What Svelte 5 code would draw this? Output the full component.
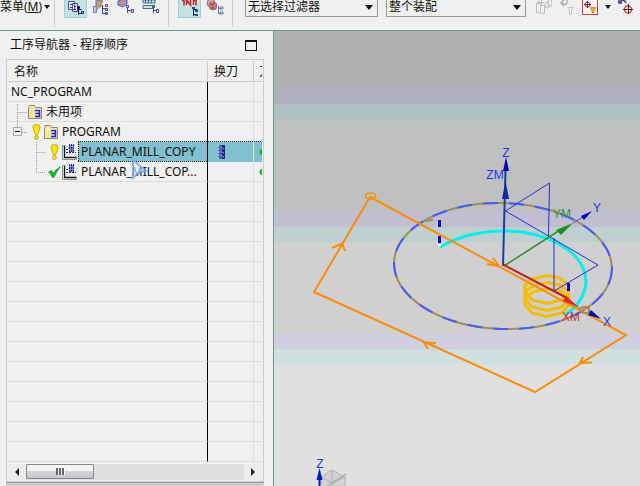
<script>
  const rows = [
    { name: 'NC_PROGRAM', kind: 'root' },
    { name: '未用项', kind: 'unused' },
    { name: 'PROGRAM', kind: 'program' },
    { name: 'PLANAR_MILL_COPY', kind: 'op', status: 'warn', selected: true },
    { name: 'PLANAR_MILL_COP...', kind: 'op', status: 'ok' },
    ...Array.from({ length: 14 }, () => ({ name: '', kind: 'empty' }))
  ];
</script>

{#snippet folder()}
  <svg width="15" height="14" viewBox="0 0 15 14" aria-hidden="true">
    <path d="M.5 2.5l1-2h5l1 2h6v11H.5z" fill="#f7e79b" stroke="#8d8870" />
    <path d="M1.5 4.5h11" stroke="#fffbe0" />
    <path d="M7 5.5h4.5v6H7M7.5 8.5h4" fill="none" stroke="#1c1cf0" stroke-width="1.5" />
  </svg>
{/snippet}

{#snippet warn()}
  <svg width="9" height="16" viewBox="0 0 9 16" aria-hidden="true">
    <path d="M1 3Q1 .5 4.500.5T8 3Q7.500 7 5.500 10.500h-2Q1.500 7 1 3z" fill="#ffe500" stroke="#b39a18" stroke-width=".8" />
    <circle cx="4.500" cy="13.500" r="1.900" fill="#ffe500" stroke="#b39a18" stroke-width=".8" />
  </svg>
{/snippet}

{#snippet tick()}
  <svg width="13" height="12" viewBox="0 0 13 12" aria-hidden="true">
    <path d="M.5 6l3-1.500L5.500 7.500Q8 3 12.500.500 9 5 6 11.500H4.500Q3 8 .5 6z" fill="#17b52b" stroke="#109020" stroke-width=".6" />
  </svg>
{/snippet}

{#snippet mill()}
  <svg width="16" height="16" viewBox="0 0 16 16" aria-hidden="true">
    <path d="M3.500 1.500h-3v14h14v-3" fill="none" stroke="#909090" />
    <path d="M2.500 2v11.500H14" fill="none" stroke="#111" stroke-width="1.300" />
    <path d="M7 1h5v7H7z" fill="#7f86dc" />
    <path d="M7.500 0v9M9.500 0v9M11.500 0v9M4 5.500h3M4 8.500h10" stroke="#2525a8" stroke-dasharray="2 1" />
  </svg>
{/snippet}

<div class="app">
  <header class="toolbar">
    <button class="menu"><span>菜单(<u>M</u>)</span><i class="caret"></i></button>
    <span class="sep"></span>
    <div class="views">
      <button class="tool on" aria-label="程序顺序视图">
        <svg width="18" height="18" viewBox="0 0 18 18">
          <path d="M1.500 1.500h6v8h-6zM5.500 3.500h5v8h-5z" fill="#dfe4f2" stroke="#4a5590" />
          <path d="M3 4.500h2M3 7.500h2M7 6.500h2M7 9.500h2" stroke="#34407c" />
          <path d="M11.500 7v8M11.500 9.500h3M11.500 13.500h3" stroke="#14147c" />
          <path d="M10.500 6.500h2v2h-2zM14.500 11.500h2v2h-2z" fill="none" stroke="#14147c" />
        </svg>
      </button>
      <button class="tool" aria-label="机床视图">
        <svg width="18" height="18" viewBox="0 0 18 18">
          <path d="M4 0h6v3l-3 3H4z" fill="#a4a4aa" stroke="#777" />
          <path d="M6 3h4v3L7 8 5 6z" fill="#d8a14c" />
          <path d="M1.500 6.500h3v6h-3z" fill="#c3c6e4" stroke="#777cb0" />
          <path d="M4 10l5-5" stroke="#8a8a98" stroke-width="1.500" />
          <path d="M10.500 5v9M10.500 8.500h4M10.500 13.500h4" stroke="#4545a4" />
          <path d="M13.500 4.500h2v2h-2zM13.500 8.500h2v2h-2zM13.500 12.500h2v2h-2z" fill="none" stroke="#4545a4" />
        </svg>
      </button>
      <button class="tool" aria-label="几何视图">
        <svg width="18" height="18" viewBox="0 0 18 18">
          <path d="M1 1l5-2 4 1v4L6 7 1 5z" fill="#8b92e8" stroke="#5c629f" /><ellipse cx="5.500" cy="2.500" rx="2.500" ry="2" fill="#e58a56" />
          <path d="M10.500 7v6M10.500 10.500h4" stroke="#4545a4" /><path d="M9.500 5.500h2v2h-2zM14.500 9.500h2v3h-2z" fill="none" stroke="#4545a4" />
        </svg>
      </button>
      <button class="tool" aria-label="加工方法视图">
        <svg width="18" height="18" viewBox="0 0 18 18">
          <path d="M1 0h12v3H1zM1 5.500h10v3H1z" fill="#cfe3ea" stroke="#456d88" /><path d="M3.500 0v3M6.500 0v3M9.500 0v3" stroke="#456d88" />
          <path d="M11.500 7v6M11.500 10.500h3" stroke="#4545a4" /><path d="M10.500 5.500h2v2h-2zM14.500 9.500h2v3h-2z" fill="none" stroke="#4545a4" />
        </svg>
      </button>
    </div>
    <span class="sep"></span>
    <div class="views two">
      <button class="tool on" aria-label="刀轨">
        <svg width="18" height="18" viewBox="0 0 18 18">
          <path d="M1 .500h2v5M5.500 5V0l4 5V0M12.500 0v5M12 .500h3v5" fill="none" stroke="#c5202a" stroke-width="1.500" />
          <path d="M12.500 7v9M12.500 9.500h4M12.500 14.500h4" stroke="#20206a" /><path d="M11 7h3v2h-3zM14 10h3v2h-3zM14 14h3v2h-3z" fill="#284c74" />
        </svg>
      </button>
      <button class="tool" aria-label="确认刀轨">
        <svg width="18" height="18" viewBox="0 0 18 18">
          <circle cx="5" cy="3" r="4" fill="#e0a0a0" stroke="#837b7b" /><circle cx="7" cy="6" r="4" fill="#cf7b7b" stroke="#837b7b" />
          <path d="M4 3l2 2M8 3L6 6M5 8h4" stroke="#9c3c3c" />
          <path d="M12.500 6v8M12.500 8.500h3M12.500 13.500h3" stroke="#7777b8" /><path d="M14 7h3v2h-3zM14 12h3v2h-3z" fill="none" stroke="#7777b8" />
        </svg>
      </button>
    </div>
    <span class="sep"></span>
    <label class="filter"><select aria-label="选择过滤器"><option>无选择过滤器</option></select><i class="caret"></i></label>
    <label class="filter scope"><select aria-label="选择范围"><option>整个装配</option></select><i class="caret"></i></label>
    <div class="picks">
      <button class="pick" aria-label="装配选择">
        <svg width="16" height="16" viewBox="0 0 16 16" fill="none" stroke="#bdbdbd">
          <path d="M.500 3.500h4v9h-4zM4.500 5.500h4v8h-4M2.500 0v3M1 2.500h7M5.500 0v6" /><ellipse cx="11" cy="5" rx="2" ry="3" /><ellipse cx="14" cy="3" rx="2" ry="4" />
        </svg>
      </button>
      <button class="pick" aria-label="重置过滤器">
        <svg width="16" height="16" viewBox="0 0 16 16">
          <path d="M3 3q4 3 5 0V-1M5 0L2 3l3 3" fill="none" stroke="#b0b0b0" stroke-width="1.500" /><path d="M8.500 7.500h6l-2 3v4h-2v-4z" fill="#f0f0f0" stroke="#c4c4c4" />
        </svg>
      </button>
      <button class="pick" aria-label="点过滤器">
        <svg width="16" height="16" viewBox="0 0 16 16">
          <rect x=".5" y="-3" width="15" height="17.500" fill="#f6f4f2" stroke="#d04444" />
          <circle cx="5.500" cy="4.500" r="2.500" fill="none" stroke="#a43b3b" /><path d="M2 4.500h7M5.500 1v7" stroke="#503030" />
          <path d="M8 7.500h6l-2 3v2h-2v-2z" fill="#f2ab2e" stroke="#d99632" />
        </svg>
      </button>
      <i class="caret small"></i>
      <button class="pick" aria-label="旋转点">
        <svg width="16" height="16" viewBox="0 0 16 16">
          <path d="M1 0v3h3M2 2q4-4 6 1" fill="none" stroke="#3d4590" stroke-width="1.500" />
          <circle cx="10" cy="9.500" r="3.500" fill="none" stroke="#e04343" stroke-width="1.500" /><path d="M5 9.500h10M10.500 4v10" stroke="#402828" />
        </svg>
      </button>
    </div>
  </header>

  <main>
    <section class="navigator">
      <div class="title"><h1>工序导航器 - 程序顺序</h1><button class="max" aria-label="最大化"></button></div>
      <div class="tree">
        <table>
          <colgroup><col class="c1" /><col class="c2" /><col /></colgroup>
          <thead><tr><th>名称</th><th>换刀</th><th class="cut">刀</th></tr></thead>
          <tbody>
            {#each rows as row, i}
              <tr class={row.kind} class:selected={row.selected} class:before={rows[i + 1]?.selected}>
                <td>
                  <div class="cell">
                    {#if row.kind === 'unused'}
                      <svg class="lines" width="20" height="20" viewBox="0 0 20 20"><path d="M9.500 2v18M9.500 10.500h10" /></svg>
                      {@render folder()}
                    {:else if row.kind === 'program'}
                      <svg class="lines" width="20" height="20" viewBox="0 0 20 20">
                        <path d="M9.500 0v5M14 10.500h5" /><rect x="5.500" y="5.500" width="8" height="8" /><path class="minus" d="M7 9.500h5" />
                      </svg>
                      <span class="state">{@render warn()}</span>
                      {@render folder()}
                    {:else if row.kind === 'op'}
                      <svg class="lines deep" width="20" height="20" viewBox="0 0 20 20"><path d={row.selected ? 'M10.500 0v20M10.500 10.500h10' : 'M10.500 0v10.500h10'} /></svg>
                      <span class="state">{#if row.status === 'warn'}{@render warn()}{:else}{@render tick()}{/if}</span>
                      {@render mill()}
                    {/if}
                    {#if row.name}<span class="label">{row.name}</span>{/if}
                  </div>
                </td>
                <td>
                  {#if row.selected}
                    <svg class="cutter" width="9" height="14" viewBox="0 0 9 14"><path d="M1 0h7v14H1z" fill="#5258b8" /><path d="M5 0h3v14H5z" fill="#242470" /><path d="M1.500 0v14" stroke="#c3cafa" stroke-dasharray="2 1" /><path d="M3 2l4 2M3 6l4 2M3 10l4 2" stroke="#8e94df" /></svg>
                  {/if}
                </td>
                <td>{#if row.kind === 'op'}<svg class="edge" width="3" height="6" viewBox="0 0 3 6"><path d="M0 3l2-3h1v6H2z" fill="#17b52b" /></svg>{/if}</td>
              </tr>
            {/each}
          </tbody>
        </table>
        <svg class="pointer" width="18" height="22" viewBox="0 0 18 22" aria-hidden="true">
          <path d="M2 1l13 11-6 1-7 6z" fill="#dcecff" fill-opacity=".55" stroke="#5d9ee0" stroke-opacity=".7" stroke-width="2" />
        </svg>
        <div class="scroll">
          <button aria-label="向左滚动"><i class="left"></i></button>
          <div class="track"><button class="thumb" aria-label="水平滚动"><i></i><i></i><i></i></button></div>
          <button aria-label="向右滚动"><i class="right"></i></button>
        </div>
      </div>
      <div class="dock"></div>
    </section>

    <section class="scene" aria-label="图形窗口">
      <svg width="366" height="455" viewBox="274 31 366 455">
        <g fill="none">
          <g transform="rotate(2 503 266)" stroke-width="2">
            <ellipse cx="503" cy="266" rx="109" ry="63" stroke="#a08d58" />
            <ellipse cx="503" cy="266" rx="109" ry="63" stroke="#435bff" stroke-dasharray="15 11" />
          </g>
          <path d="M424 221l9-1" stroke="#a08d58" stroke-width="2" />
          <path d="M440 247Q466 232 500 231T559 244Q586 259 586 283 583 304 565 315" stroke="#00f0f0" stroke-width="3" />
          <g stroke="#f5bd00" stroke-width="3">
            {#each [0, 7, 13] as dy}
              <path transform={`translate(0 ${dy})`} d="M525 285L533 279 547 275.500 560 278 568 284 569 292 562 300 547 303.500 532 300 525 292z" />
            {/each}
          </g>
          <path d="M439.500 220v7M439.500 236v7M568.500 283v8" stroke="#0000f0" stroke-width="3" />
          <path d="M438 245h3" stroke="#fff" stroke-width="2" />
          <path d="M505.500 211L549.500 183 548.500 237M505.500 211L598 265 554 291V238" stroke="#2929e0" />
          <path d="M503 266L505.500 170" stroke="#173fa0" stroke-width="2" />
          <path d="M504 266L560 230" stroke="#2d912d" stroke-width="1.500" />
          <path d="M573 223l10-6" stroke="#5444cc" />
          <path d="M503 264.500L568 298.500" stroke="#bd2020" stroke-width="2" />
          <g stroke="#f98c08" stroke-width="2">
            <path d="M370 197L626 335 535 392 314 292z" />
            <ellipse cx="370.500" cy="196" rx="5" ry="3" stroke-width="1.500" />
            <path d="M332 248L342 243.500 345 251M436 343L424 342.500 428 349M592 362.500L580 363 583 357M487 264L499 266 493 258" />
          </g>
          <path d="M579 310q4-5 10-2v4q-5 3-8-1" stroke="#a08d58" stroke-width="2" />
        </g>
        <path d="M506 157L509 171H503zM581 216L592 211 584 220zM591 310L601 319 588 315z" fill="#0000b8" />
        <path d="M505.500 181L509 199H502z" fill="#092d9e" />
        <path d="M573 223L561 235 556 230z" fill="#248b2a" />
        <path d="M566 296L580 308 563 301z" fill="#df2929" />
        <g class="axis" text-anchor="middle">
          <text x="506" y="157">Z</text><text x="495" y="179">ZM</text><text x="597" y="212">Y</text><text x="607" y="326">X</text>
          <text x="562" y="218" class="ym">YM</text><text x="571" y="321" class="xm">XM</text><text x="320" y="468">Z</text>
        </g>
        <g stroke="#b0b0b0"><path d="M321 477L332 470 345 477V490H321z" fill="#d2d2d2" /><path d="M321 477l11 6 13-6M332 470v13M321 490l11-7" fill="none" /></g>
        <path d="M330 485l16-11" stroke="#9dbb9f" stroke-width="2" />
        <path d="M319.500 478v9" stroke="#0021b5" stroke-width="2" /><path d="M319.500 468l3 12h-6z" fill="#0021b5" />
      </svg>
    </section>
  </main>
</div>

<style>
  :global(body) { margin: 0; }
  .app { height: 100vh; display: flex; flex-direction: column; overflow: hidden; background: #f0f0f0; color: #111; font: 12px/20px "Noto Sans", "Noto Sans CJK SC", sans-serif; }
  svg { display: block; flex: none; }
  button { padding: 0; border: 0; background: none; color: inherit; font: inherit; }
  .toolbar { flex: none; height: 30px; display: flex; align-items: flex-start; border-bottom: 1px solid #7b9090; }
  .menu { display: flex; align-items: center; height: 14px; width: 54px; flex: none; white-space: nowrap; line-height: 14px; }
  .caret { width: 0; border: 4px solid transparent; border-top: 5px solid #111; border-bottom: 0; }
  .menu .caret { border-width: 4px 3px 0; margin-left: 2px; }
  .sep { width: 1px; height: 27px; background: #ccc; flex: none; }
  .views { display: flex; gap: 2px; padding-left: 9px; width: 104px; flex: none; }
  .views.two { width: 54px; }
  .tool { width: 23px; height: 18px; display: flex; justify-content: center; overflow: hidden; box-sizing: border-box; }
  .tool.on { background: #c4e2e2; border: 1px solid #9cd0dc; border-top: 0; }
  .filter { position: relative; flex: none; margin-left: 12px; width: 133px; height: 17px; }
  .filter.scope { margin-left: 8px; width: 140px; }
  select { appearance: none; display: block; box-sizing: border-box; width: 100%; height: 17px; padding: 0 2px 2px; border: 1px solid #999; border-top: 0; border-radius: 0; background: #f0f0f0; color: #111; font: inherit; line-height: 14px; }
  .filter .caret { position: absolute; right: 5px; top: 5px; }
  .picks { display: flex; align-items: flex-start; gap: 7px; padding-left: 10px; }
  .pick { width: 16px; height: 16px; overflow: hidden; }
  .small { border-width: 4px 3px 0; margin: 5px 0 0; }

  main { flex: 1; display: flex; min-height: 0; }
  .navigator { width: 273px; flex: none; display: flex; flex-direction: column; border-right: 1px solid #7b9090; }
  .title { display: flex; align-items: center; justify-content: space-between; height: 28px; flex: none; padding: 0 16px 0 10px; }
  h1 { margin: 0; font: inherit; }
  .max { box-sizing: border-box; width: 12px; height: 11px; border: 1px solid #111; border-top-width: 2px; }
  .tree { position: relative; flex: 1; min-height: 0; display: flex; flex-direction: column; margin: 0 9px 0 6px; padding: 1px; border: 1px solid #ccc; overflow: hidden; }
  table { width: 100%; table-layout: fixed; border-collapse: separate; border-spacing: 0; }
  .c1 { width: 200px; }
  .c2 { width: 46px; }
  th, td { box-sizing: border-box; height: 20px; padding: 0; border-bottom: 1px solid #dcdcdc; border-right: 1px solid #dcdcdc; line-height: 19px; overflow: hidden; white-space: nowrap; }
  th { height: 21px; padding-left: 6px; border-color: #ccc; font-weight: normal; text-align: left; }
  th.cut { padding-left: 5px; }
  th:last-child, td:last-child { border-right: 0; }
  td:first-child { border-right: 1px solid #000; }
  .cell { display: flex; align-items: center; height: 19px; overflow: hidden; }
  .root .cell { padding-left: 3px; }
  .label { flex: 1; height: 19px; padding-left: 3px; }
  .root .label { padding-left: 0; }
  .lines { fill: none; stroke: #999; stroke-dasharray: 1 1; }
  .lines rect { stroke: #aaa; stroke-dasharray: none; }
  .lines .minus { stroke: #111; stroke-dasharray: none; }
  .deep { margin-left: 18px; }
  .state { width: 16px; display: flex; justify-content: center; }
  .selected .label { padding-left: 2px; background: #80c0d0; border-left: 1px dotted #111; }
  .selected td:not(:first-child) { background: #80c0d0; }
  .before td, .selected td { border-bottom: 0; background-image: repeating-linear-gradient(90deg, #222 0 1px, #a9cdd5 1px 2px); background-size: 100% 1px; background-position: bottom; background-repeat: no-repeat; }
  .before td:first-child, .selected td:first-child { background-size: 129px 1px; background-position: right bottom; }
  .before .cell, .selected .cell { margin-bottom: 1px; }
  .cutter { margin-left: 9px; }
  .edge { margin-left: 5px; }
  .pointer { position: absolute; left: 124px; top: 99px; }
  .scroll { display: flex; flex: none; height: 16px; margin-top: 2px; background: #e0e0e0; }
  .scroll > button { width: 18px; background: #eee; display: flex; align-items: center; justify-content: center; }
  .left, .right { border: 4px solid transparent; border-right: 4px solid #222; border-left: 0; }
  .right { border-left: 4px solid #222; border-right: 0; }
  .track { flex: 1; }
  .thumb { box-sizing: border-box; width: 68px; height: 15px; display: flex; gap: 1px; align-items: center; justify-content: center; border: 1px solid #888; border-radius: 1px; background: linear-gradient(#f3f3f3 45%, #d3d3d9 50%, #c4c4cc); }
  .thumb i { width: 2px; height: 7px; background: #666; box-shadow: 1px 0 #fff; }
  .dock { height: 4px; flex: none; margin: 0 9px 0 6px; background: #ccc; border-top: 1px solid #999; box-sizing: border-box; }

  .scene { flex: 1; min-width: 0; overflow: hidden; background: linear-gradient(#b0b0b0 58px, #b0aebf 58px 73px, #b0bfbf 73px 88px, #c0c0c0 88px 180px, #c0bed0 180px 196px, #c0d0d0 196px 211px, #d0d0d0 211px 302px, #d0cfe0 302px 318px, #d0e0e0 318px 333px, #e0e0e0 333px); }
  .axis { font: 12px "Liberation Sans", sans-serif; fill: #1838e8; }
  .ym { fill: #398f39; }
  .xm { fill: #c33; }
</style>
